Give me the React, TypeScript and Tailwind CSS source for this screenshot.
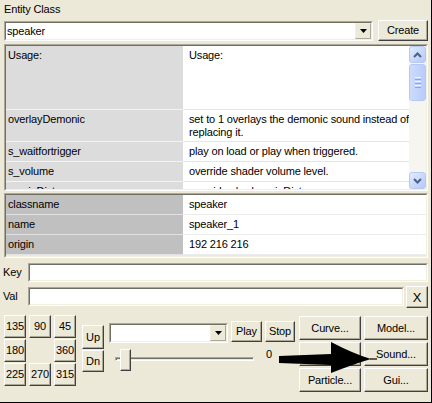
import React from "react";

type P = { className?: string; children?: React.ReactNode };

// Classic raised 3D push button
function Btn({ className = "", children }: P) {
  return (
    <div
      className={`flex items-center justify-center bg-[#ece9d8] border border-t-white border-l-white border-r-[#404040] border-b-[#404040] shadow-[inset_-1px_-1px_0_#aca899] ${className}`}
    >
      {children}
    </div>
  );
}

// Two-pixel sunken frame used for edits, combos and lists
function Sunken({ className = "", inner = "", children }: P & { inner?: string }) {
  return (
    <div
      className={`border border-t-[#aca899] border-l-[#aca899] border-r-white border-b-white ${className}`}
    >
      <div
        className={`h-full border border-t-[#716f64] border-l-[#716f64] border-r-[#f1efe2] border-b-[#f1efe2] ${inner}`}
      >
        {children}
      </div>
    </div>
  );
}

function DropArrow() {
  return (
    <div className="w-[16px] h-full flex items-center justify-center bg-[#ece9d8] border border-t-[#f1efe2] border-l-[#f1efe2] border-r-[#aca899] border-b-[#aca899]">
      <svg width="7" height="4" viewBox="0 0 7 4">
        <path d="M0 0H7L3.5 4Z" fill="#000" />
      </svg>
    </div>
  );
}

function ScrollBtn({ up }: { up: boolean }) {
  return (
    <div className="h-[17px] w-[17px] rounded-[3px] border border-[#b7c9f2] bg-linear-to-br from-[#e2ebfe] to-[#b4c8f9] flex items-center justify-center">
      <svg width="9" height="6" viewBox="0 0 9 6">
        <path
          d={up ? "M1 5L4.5 1.5L8 5" : "M1 1L4.5 4.5L8 1"}
          stroke="#4d6185"
          strokeWidth="2"
          fill="none"
        />
      </svg>
    </div>
  );
}

function Scrollbar() {
  return (
    <div className="w-[17px] flex flex-col bg-[#f6f5f0]">
      <ScrollBtn up />
      <div className="mt-[1px] h-[37px] rounded-[3px] border border-[#b7c9f2] bg-linear-to-r from-[#cddbfd] to-[#b8cbfa] flex flex-col items-center justify-center gap-[1px]">
        <div className="w-[6px] h-[1px] bg-[#eef3ff]" />
        <div className="w-[6px] h-[1px] bg-[#8ca4dc]" />
        <div className="w-[6px] h-[1px] bg-[#eef3ff]" />
        <div className="w-[6px] h-[1px] bg-[#8ca4dc]" />
        <div className="w-[6px] h-[1px] bg-[#eef3ff]" />
        <div className="w-[6px] h-[1px] bg-[#8ca4dc]" />
      </div>
      <div className="flex-1" />
      <ScrollBtn up={false} />
    </div>
  );
}

type VarRow = { k: string; v: string[]; h: string };

const usage: VarRow[] = [
  { k: "Usage:", v: ["Usage:"], h: "h-[64px]" },
  {
    k: "overlayDemonic",
    v: ["set to 1 overlays the demonic sound instead of", "replacing it."],
    h: "h-[32px]",
  },
  { k: "s_waitfortrigger", v: ["play on load or play when triggered."], h: "h-[20px]" },
  { k: "s_volume", v: ["override shader volume level."], h: "h-[20px]" },
  { k: "s_minDistance", v: ["override shader minDistance."], h: "h-[20px]" },
];

const spawnArgs = [
  { k: "classname", v: "speaker" },
  { k: "name", v: "speaker_1" },
  { k: "origin", v: "192 216 216" },
];

export default function App() {
  return (
    <div className="relative w-[432px] h-[403px] overflow-hidden bg-[#ece9d8] border-r border-b border-black font-['Liberation_Sans',Arial,sans-serif] text-[11px] leading-[13px] tracking-[-0.15px] text-black select-none">
      <div className="h-[20px] pl-[4px] pt-[3px]">Entity Class</div>

      {/* class picker */}
      <div className="flex items-start pl-[4px] pr-[3px]">
        <Sunken className="mt-[1px] h-[20px] flex-1" inner="bg-white flex items-center">
          <span className="flex-1 pl-[1px]">speaker</span>
          <DropArrow />
        </Sunken>
        <Btn className="ml-[5px] w-[50px] h-[21px]">Create</Btn>
      </div>

      {/* editor variables */}
      <Sunken className="mt-[3px] ml-[4px] mr-[3px] h-[147px]" inner="flex overflow-hidden">
        <div className="flex-1 flex flex-col overflow-hidden">
          {usage.map((r) => (
            <div key={r.k} className={`flex shrink-0 ${r.h}`}>
              <div className="w-[177px] shrink-0 bg-[#dcdcdc] border-b border-[#f3f3f3] pl-[2px] pt-[3px] whitespace-nowrap overflow-hidden">
                {r.k}
              </div>
              <div className="flex-1 bg-white border-b border-[#e6e6e6] pl-[6px] pt-[3px] whitespace-nowrap overflow-hidden">
                {r.v.map((line) => (
                  <div key={line}>{line}</div>
                ))}
              </div>
            </div>
          ))}
        </div>
        <Scrollbar />
      </Sunken>

      {/* spawn args */}
      <Sunken className="mt-[2px] ml-[4px] mr-[3px] h-[65px]" inner="flex flex-col overflow-hidden">
        {spawnArgs.map((r) => (
          <div key={r.k} className="flex h-[20px] shrink-0">
            <div className="w-[177px] shrink-0 bg-[#c0c0c0] border-b border-[#e2e2e2] pl-[2px] pt-[3px]">
              {r.k}
            </div>
            <div className="flex-1 bg-white border-b border-[#ececec] pl-[6px] pt-[3px]">{r.v}</div>
          </div>
        ))}
      </Sunken>

      {/* key / value edits */}
      <div className="mt-[5px] flex items-center pl-[3px] pr-[3px] h-[19px]">
        <span className="w-[25px]">Key</span>
        <Sunken className="flex-1 h-[19px]" inner="bg-white" />
      </div>
      <div className="mt-[4px] flex items-start pl-[3px] pr-[3px]">
        <span className="w-[25px] mt-[4px]">Val</span>
        <Sunken className="flex-1 h-[19px] mt-[1px]" inner="bg-white" />
        <Btn className="ml-[2px] w-[22px] h-[22px] text-[13px]">X</Btn>
      </div>

      {/* controls */}
      <div className="mt-[7px] flex items-start pl-[4px] pr-[3px]">
        <div className="grid grid-cols-[22px_22px_22px] grid-rows-[23px_23px_23px] gap-x-[3px] gap-y-[1px]">
          <Btn>135</Btn>
          <Btn>90</Btn>
          <Btn>45</Btn>
          <Btn>180</Btn>
          <div />
          <Btn>360</Btn>
          <Btn>225</Btn>
          <Btn>270</Btn>
          <Btn>315</Btn>
        </div>

        <div className="ml-[6px] mt-[10px] flex flex-col w-[22px]">
          <Btn className="h-[24px]">Up</Btn>
          <Btn className="mt-[1px] h-[22px]">Dn</Btn>
        </div>

        <div className="ml-[5px] flex flex-col">
          <div className="mt-[6px] flex items-start">
            <Sunken className="mt-[2px] w-[119px] h-[20px]" inner="bg-white flex justify-end">
              <DropArrow />
            </Sunken>
            <Btn className="ml-[3px] w-[31px] h-[21px]">Play</Btn>
            <Btn className="ml-[3px] w-[30px] h-[21px]">Stop</Btn>
          </div>
          <div className="mt-[6px] flex items-start">
            <div className="relative ml-[6px] w-[139px] h-[22px]">
              <div className="absolute left-0 right-0 top-[8px] h-[4px] border border-t-[#aca899] border-l-[#aca899] border-r-white border-b-white shadow-[inset_1px_1px_0_#716f64]" />
              <div className="absolute left-[5px] top-0 w-[11px] h-[22px] bg-[#ece9d8] border border-t-white border-l-white border-r-[#404040] border-b-[#404040] shadow-[inset_-1px_-1px_0_#aca899]" />
            </div>
            <span className="ml-[12px] -mt-[1px]">0</span>
          </div>
        </div>

        <div className="ml-[4px] mt-[1px] grid grid-cols-[62px_64px] grid-rows-[24px_24px_24px] gap-x-[3px] gap-y-[2px]">
          <Btn>Curve...</Btn>
          <Btn>Model...</Btn>
          <Btn />
          <Btn>Sound...</Btn>
          <Btn>Particle...</Btn>
          <Btn>Gui...</Btn>
        </div>
      </div>

      {/* pointer arrow drawn over the buttons */}
      <svg
        className="absolute left-[276px] top-[338px]"
        width="104"
        height="38"
        viewBox="0 0 104 38"
      >
        <path
          d="M3 18 L55 16 L55 4 Q78 16 95 21 Q78 26 55 35 L55 27 L3 25 Z"
          fill="#000"
        />
        <path d="M94 21 L101 21" stroke="#000" strokeWidth="1.2" />
      </svg>
    </div>
  );
}
